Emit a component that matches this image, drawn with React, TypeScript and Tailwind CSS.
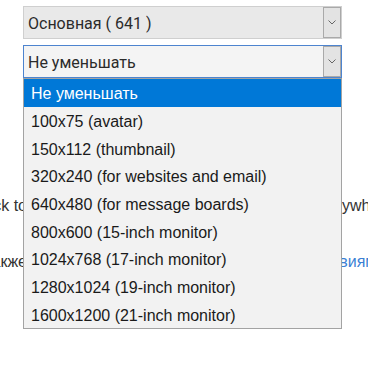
import React from 'react';

const sizes = [
  'Не уменьшать',
  '100x75 (avatar)',
  '150x112 (thumbnail)',
  '320x240 (for websites and email)',
  '640x480 (for message boards)',
  '800x600 (15-inch monitor)',
  '1024x768 (17-inch monitor)',
  '1280x1024 (19-inch monitor)',
  '1600x1200 (21-inch monitor)',
];

const Chevron = () => (
  <svg width="8" height="5" viewBox="0 0 8 5" fill="none" stroke="#666" strokeWidth="1">
    <path d="M0.5 0.5 L4 4 L7.5 0.5" />
  </svg>
);

const FakeSelect = ({ label, active }: { label: string; active?: boolean }) => (
  <div
    className={
      'flex h-[33px] w-[319px] items-stretch border ' +
      (active ? 'border-[#4d84cf] bg-[#f4f4f4]' : 'border-[#cfcfcf] bg-[#e9e9e9]')
    }
  >
    <span className="flex flex-1 items-center pl-[4px] pt-[3px] text-[16px] text-[#2b2b2b] font-['Roboto',sans-serif]">
      {label}
    </span>
    <span className="flex w-[18px] items-center justify-center border border-[#a9a9a9] bg-[#e3e3e3]">
      <Chevron />
    </span>
  </div>
);

export default function App() {
  return (
    <div className="relative h-[379px] w-[368px] overflow-hidden bg-white font-['Liberation_Sans',Arial,sans-serif] text-[16px] text-[#333]">
      <div className="flex flex-col gap-[6px] pl-[23px] pt-[6px]">
        <FakeSelect label="Основная ( 641 )" />
        <FakeSelect label="Не уменьшать" active />
      </div>

      {/* page text behind the open list */}
      <div className="mt-[118px] flex h-[20px] items-center whitespace-nowrap">
        <span className="flex w-[27px] shrink-0 justify-end overflow-hidden">Click to</span>
        <span className="ml-[315px] shrink-0">ywhere</span>
      </div>
      <div className="mt-[36px] flex h-[20px] items-center whitespace-nowrap">
        <span className="flex w-[27px] shrink-0 justify-end overflow-hidden">Также</span>
        <span className="ml-[278px] shrink-0 text-[#3b7fd4]">условиям</span>
      </div>

      {/* open dropdown list */}
      <ul className="absolute left-[23px] top-[78px] w-[319px] border border-[#a3a3a3] bg-[#f2f2f2]">
        {sizes.map((s, i) => (
          <li
            key={s}
            className={
              'flex h-[27.7px] items-center pl-[7px] pt-[3px] ' +
              (i === 0 ? 'bg-[#0078d7] text-white' : 'text-[#1a1a1a]')
            }
          >
            {s}
          </li>
        ))}
      </ul>
    </div>
  );
}
